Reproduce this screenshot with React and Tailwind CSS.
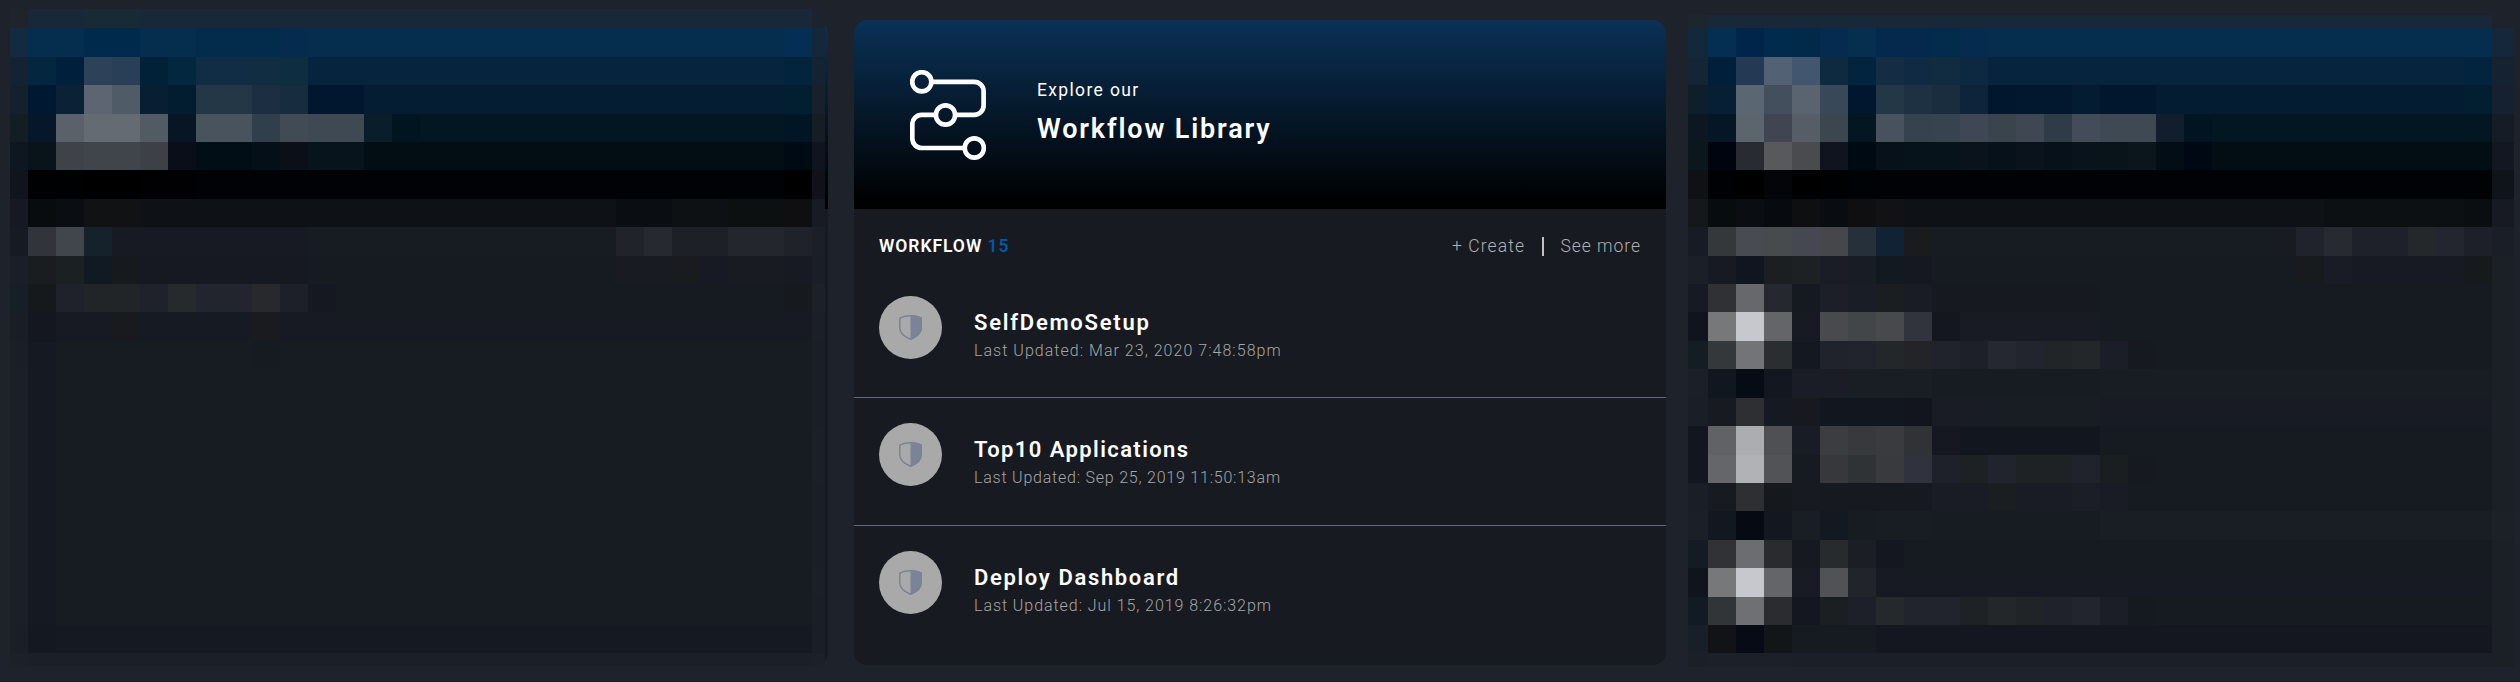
const FONT = "font-[Roboto,'Noto_Sans',sans-serif]";

// Each row lists its colour runs as "hex" or "hex*columns". The first and last
// columns are the narrow edge columns; the run marked "+" fills up to the edge.
const LEFT_ROWS = [
  "1f242c 182838*2 192a37*2 182838+ 1b232e",
  "142a3e 052e4e*2 002a4b*2 052d4d*2 032b4c*3 052b4e 052e4e+ 052e54 13283b",
  "142333 04263f 001f3c 2d4259 293e57 002138 042740 112c45*2 102d42 0f2d41 07243f+ 02243d 142332",
  "14202d 001831 0b2135 5c6571 505b68 071e33 021d30 243746*2 1b2e42 182c40 00172f*2 041d32+ 021f31 18202c",
  "121e24 051729 5b616b 646b72*2 525a63 081525 48535d*2 313e4b 424b54 3f4954*2 0a1d2b 011521 031723+ 001624 161d25",
  "0e161f 08141a 3f4349 3f454a*2 3d4046 090e18 020e16*2 050f18 0b1018 08141b*2 020d14+ 000a15 10141f",
  "10141c 000103*2 000000*2 010104*2 000206+ 000000 111119",
  "161921 080c0f 0a0d11 101214*2 0e1115+ 0a0e12*2 0e1114*2 0c1010*2 0f0e10 181a24",
  "161b23 32343c 41454c 15222c 171a22*7 171c23+ 20232a 262930 1d2027*2 24262e*2 202229 1b1f27",
  "191e27 1a1d20 1b2022 111a22 161a1d 161921*6 161a21+ 181b22*2 191b1e 171a22 191b23*2 171a22 1a1f27",
  "181e25 15191c 1f222a 222528*2 1f222a 272a2d 22252d*2 27292c 1d2028 151820 161a21+ 16191d 1c2128",
  "191e25 14171f 171a22*2 181a1d 161a22*4 191b1e 171a22+ 1b2027",
  "1a1f26 151921 171b22*7 161a21 171b22+ 1a1f26",
  "1b2027 151921 171b22+ 1a1f26",
  "1b2027 151921 171b22+ 1a1f26",
  "1b2027 151921 171b22+ 1b2027",
  "1b2027 151921 171b22+ 1b2027",
  "1b2027 151921 171b22+ 1a1f26",
  "1b2027 151921 171b22+ 1a1f26",
  "1b2027 151921 171b22+ 1a1f26",
  "1b2027 151921 171b22+ 1b2027",
  "1b2027 151921 171b22+ 1a1f26",
  "1a1f26 141820 151921+ 1a1f26",
  "1c2128 1b1f27+ 1c2128",
];

const RIGHT_ROWS = [
  "1c262d 182838+ 1e232b",
  "12293d 052e53 00254a 012b4c 00294a 052b50 052e4f 04294c*2 032c4c 052b4e 052e4e+ 15273a",
  "142535 001f3b 243a54 536175 435670 0e2a40 02243e 142d44 112a44 112b40 0c2941 07243f+ 02243f 142231",
  "0e1e2b 071f34 5a6671 434f5c 5a6470 394858 00182f 243747 1d3143 1a2d3f 0e243a 00172e 01182e*2 041c32 00172d*2 041c32+ 021f31 152031",
  "0d1722 051627 5c646d 404551 575d66 3b464e 041622 48525e 36424e 37434e 3e4753 3a444d 3f4752 2f3b47 434c58 3f4953*2 121e2e 001421 031723+ 161c26",
  "0c161d 00040f 282b31 57595d 494b4f 0f141e 000a13 071119 06131a*2 0a131b 07111a 0a131b 07111a 09131b 09141a 0b151c 030d15 000913 020d14+ 121721",
  "0f1215 000104 000000 040508 000000 000102 000305 000206+ 0f141b",
  "14181a 070c0e 0a0e12 070b10 0e0f11 090c10 0f0f12 121114 0e1115+ 0c1013*5 0a0e10 171a23",
  "161b24 35383b 484b52 484b4e 454850 45474a 25303a 122235 191b1d 171c23+ 181b22 20232b 282a31 1e2129*2 25282a 23262e 1d2028 1a1f27",
  "1a1f28 171a22 10161f 1b1f21 1d2123 1a1d26 181c24 131920 151820 161a21+ 181b1e 191c24 171a22*4 171a1d 1b2027",
  "151a23 2f3134 67686b 262830 151920 1c1f27 191d25 1a1e20 191c24 161920*6 161a21+ 1b2027",
  "0f141e 77787a c7c8cd 646568 171a22 484a4d 434649 47494c 32343d 14171f 181b23*5 161a21+ 1b2027",
  "151c22 35383a 737478 2b2e30 141820 20232b 21242c 242729 222427 20232b 1e2029 262831 22252d 222527 242729 1b1e27 161920 161a21+ 1b2027",
  "1b2028 111720 060c15 131720 1a1d25*2 191e24*3 171b22*6 181c23+ 1b2027",
  "191e27 181a22 2d2f32 151a22 17191f 11161f*3 12151e 191c24*2 181d24*4 181b23+ 1b2027",
  "11161f 616266 acadb1 4f5054 181c24 3b3d41 37393c 393b3e 303236 151820 12161e*5 161a21+ 1b2027",
  "11161f 656669 b1b2b6 525356 161a21 36383b 303336 383a3d 30333d 1e2129 1d2123 21242d 1f2224*2 20232b 1b1e20 161920 161a21+ 1b2027",
  "191e27 171a21 2d2f32 15181d 171a21 161920*4 191c24*2 1b1e20 191c25*2 1b1e27 191c24 161a21+ 1b2027",
  "1b2028 111820 050a13 131820 191e25 131920 171c22 181c23*2 171c22*6 191d24+ 1c2128",
  "151b23 303235 6c6d71 292b2e 161920 282b2e 1b1e25 14171f 161a21+ 1b2027",
  "0f141d 777879 c7c8cd 646568 181b23 505256 21242b 171a22+ 1b2027",
  "141a23 323538 6f7074 2a2c2f 14171f 1c1f21 1d2028 26292b 21242d*2 1f2225 242729 212426 1f222b 23252e 1b1e27 151920 161a21+ 1b2027",
  "191f28 111316 060b15 131618 161a21*3 14171f+ 1b2027",
  "1b2027 1c2028*3 1b1f27+ 1b2027",
];

function Mosaic({ rows, className, rowClass, firstRow, lastRow, edgeStart, edgeEnd }) {
  return (
    <div aria-hidden="true" className={`absolute flex flex-col ${className}`}>
      {rows.map((row, r) => {
        const runs = row.split(" ");
        const height = r === 0 ? firstRow : r === rows.length - 1 ? lastRow : rowClass;
        return (
          <div key={r} className={`flex shrink-0 ${height}`}>
            {runs.map((run, i) => {
              const style = { backgroundColor: "#" + run.slice(0, 6) };
              const fills = run.endsWith("+");
              if (i > 0 && i < runs.length - 1 && !fills) {
                style.width = 28 * Number(run.split("*")[1] || 1);
              }
              const size = i === 0 ? edgeStart : i === runs.length - 1 ? edgeEnd : fills ? "flex-1" : "";
              return <span key={i} className={`block ${fills ? "" : "shrink-0"} ${size}`} style={style} />;
            })}
          </div>
        );
      })}
    </div>
  );
}

function WorkflowIcon() {
  return (
    <svg className="ml-14 h-[90px] w-[76px] shrink-0" viewBox="0 0 76 90" fill="none" stroke="white" strokeWidth="4.7">
      <circle cx="11.8" cy="11.8" r="9.6" />
      <circle cx="35.5" cy="45" r="9.6" />
      <circle cx="64.3" cy="78" r="9.6" />
      <path d="M21.4 11.8H64.2a9.4 9.4 0 0 1 9.4 9.4V35.5a9.4 9.4 0 0 1-9.4 9.4H45.1M25.9 44.9H11.7a9.4 9.4 0 0 0-9.4 9.4V68.6a9.4 9.4 0 0 0 9.4 9.4H54.7" />
    </svg>
  );
}

function ShieldIcon() {
  return (
    <svg className="h-[25px] w-[23px]" viewBox="0 0 23 25">
      <path d="M11.5.8C8.2.8 4.2 1.5.8 3.2v9.6c0 5.6 5.2 9.2 10.7 11.4 5.5-2.2 10.7-5.8 10.7-11.4V3.2C18.8 1.5 14.8.8 11.5.8Z" fill="none" stroke="#7a8397" strokeWidth="1.5" />
      <path d="M11.5.1c3.5 0 7.9.8 11.4 2.6v10.1c0 6-5.5 9.9-11.4 12.2Z" fill="#7a8397" />
    </svg>
  );
}

const WORKFLOWS = [
  { name: "SelfDemoSetup", updated: "Mar 23, 2020 7:48:58pm", height: "h-[127px] border-b", nameSpacing: "tracking-[1.75px]", dateSpacing: "tracking-[1.03px]" },
  { name: "Top10 Applications", updated: "Sep 25, 2019 11:50:13am", height: "h-[128px] border-b", nameSpacing: "tracking-[1.4px]", dateSpacing: "tracking-[0.78px]" },
  { name: "Deploy Dashboard", updated: "Jul 15, 2019 8:26:32pm", height: "h-[128px]", nameSpacing: "tracking-[1.65px]", dateSpacing: "tracking-[0.94px]" },
];

function Card({ children }) {
  return (
    <section className="h-[645px] w-[812px] shrink-0 overflow-hidden rounded-[13px] bg-[#171a21]">
      {children}
    </section>
  );
}

const BANNER = "flex h-[189px] bg-linear-to-b/srgb from-[#0a3156] to-black to-97%";

function WorkflowCard() {
  return (
    <Card>
      <header className={`${BANNER} pt-[50px]`}>
        <WorkflowIcon />
        <div className="ml-[51px] pt-2 whitespace-nowrap text-white">
          <p className="text-[17.5px] leading-6 tracking-[1.35px]">Explore our</p>
          <h2 className="mt-[11px] text-[27px] leading-8 font-semibold tracking-[1.85px]">Workflow Library</h2>
        </div>
      </header>
      <div className="flex h-[62px] items-start justify-between whitespace-nowrap pt-[25px] pr-[25px] pl-[25px]">
        <h3 className="text-[17.5px] leading-6 font-semibold tracking-[0.95px] text-white">
          WORKFLOW <span className="text-[#0058a8]">15</span>
        </h3>
        <div className="flex items-center text-[17.5px] leading-6 font-light text-[#b0b0b0]">
          <span className="tracking-[1.1px]">+ Create</span>
          <span className="mr-[17px] ml-[17px] h-[19px] w-[1.5px] bg-[#c4c0bc]" />
          <span className="tracking-[0.95px]">See more</span>
        </div>
      </div>
      <ul>
        {WORKFLOWS.map((w) => (
          <li key={w.name} className={`flex items-start border-[#66697a] pt-[25px] pl-[25px] ${w.height}`}>
            <span className="flex size-[63px] shrink-0 items-center justify-center rounded-full bg-[#a9a9a9]">
              <ShieldIcon />
            </span>
            <div className="ml-8 pt-[13px] whitespace-nowrap">
              <h4 className={`text-[22px] leading-[28px] font-semibold text-white ${w.nameSpacing}`}>{w.name}</h4>
              <p className={`text-[16px] leading-[28px] font-light text-[#a6a6a6] ${w.dateSpacing}`}>Last Updated: {w.updated}</p>
            </div>
          </li>
        ))}
      </ul>
    </Card>
  );
}

export default function App() {
  return (
    <main className={`relative flex h-[682px] w-[2520px] gap-[26px] overflow-hidden border-b border-[#1b1926] bg-[#1e222a] pt-5 pl-4 ${FONT}`}>
      <Card>
        <div className={BANNER} />
      </Card>
      <WorkflowCard />
      <Card>
        <div className={BANNER} />
      </Card>
      <Mosaic
        rows={LEFT_ROWS}
        className="top-[9px] left-[10px] w-[815px]"
        rowClass="h-[28.4167px]"
        firstRow="h-[19.4167px]"
        lastRow="h-[12.4px]"
        edgeStart="w-[18px]"
        edgeEnd="w-[13px]"
      />
      <Mosaic
        rows={RIGHT_ROWS}
        className="top-[15px] left-[1688px] w-[826px]"
        rowClass="h-[28.4167px]"
        firstRow="h-[13.4167px]"
        lastRow="h-[13.4px]"
        edgeStart="w-5"
        edgeEnd="w-[22px]"
      />
    </main>
  );
}
